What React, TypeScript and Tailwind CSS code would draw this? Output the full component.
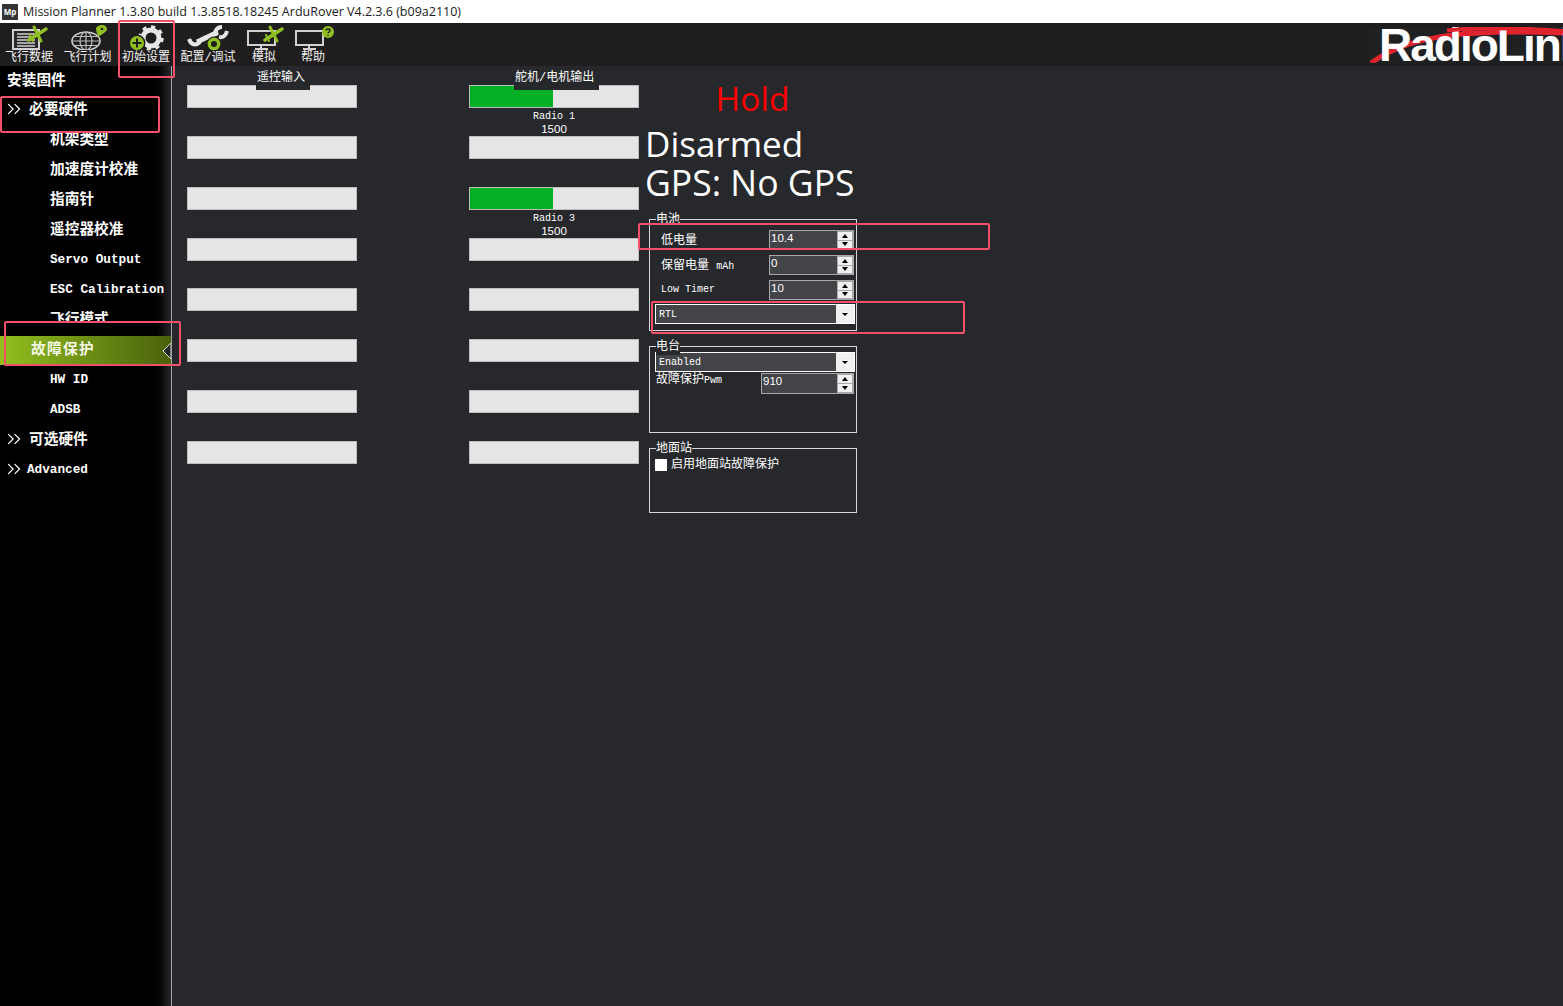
import React from "react";
import { ChevronsRight } from "lucide-react";

const GREEN = "#8fbf21";

function PlaneMark({ x, y }: { x: number; y: number }) {
  return (
    <g transform={`translate(${x} ${y})`} stroke={GREEN} strokeLinecap="round" fill="none">
      <path d="M1 14L18 3" strokeWidth="3.500" />
      <path d="M6 1L13 15" strokeWidth="3" />
      <path d="M2 9L5 15" strokeWidth="2" />
    </g>
  );
}

function FlightDataIcon() {
  return (
    <svg width="44" height="26" viewBox="0 0 44 26">
      <rect x="6" y="6" width="26" height="19" fill="#2a2828" stroke="#d2d2d2" strokeWidth="2" />
      <path d="M10 10h18M10 13h18M10 16h18M10 19h18M10 22h18" stroke="#cfcfcf" strokeWidth="1.300" />
      <PlaneMark x={21} y={2} />
    </svg>
  );
}

function FlightPlanIcon() {
  return (
    <svg width="44" height="26" viewBox="0 0 44 26">
      <ellipse cx="20" cy="17" rx="14" ry="9" fill="#1f1d1d" stroke="#cfcfcf" strokeWidth="1.600" />
      <ellipse cx="20" cy="17" rx="6" ry="9" fill="none" stroke="#bdbdbd" strokeWidth="1.200" />
      <path d="M6 17h28M9 12.500h22M9 21.500h22M20 8v18" stroke="#bdbdbd" strokeWidth="1.200" />
      <path d="M36 1c3 0 5 2 5 4 0 3-5 5-9 8 0-3-2-5-2-8 0-2 3-4 6-4z" fill={GREEN} />
      <circle cx="36" cy="5" r="1.300" fill="#1f1d1d" />
    </svg>
  );
}

function SetupIcon() {
  return (
    <svg width="42" height="26" viewBox="0 0 42 26">
      <circle cx="26" cy="14" r="8" fill="none" stroke="#e6e6e6" strokeWidth="5" />
      <circle cx="26" cy="14" r="11" fill="none" stroke="#e6e6e6" strokeWidth="3.500" strokeDasharray="4 4.600" />
      <circle cx="26" cy="13" r="3" fill="#1f1d1d" />
      <circle cx="12" cy="19" r="8.500" fill="#1f1d1d" />
      <circle cx="12" cy="19" r="7" fill={GREEN} />
      <path d="M7.500 19h9M12 14.500v9" stroke="#1f1d1d" strokeWidth="2" />
    </svg>
  );
}

function ConfigIcon() {
  return (
    <svg width="44" height="26" viewBox="0 0 44 26">
      <path d="M11 18L32 8" stroke="#e6e6e6" strokeWidth="5" />
      <path d="M3 15c2 6 7 7 11 3" fill="none" stroke="#e6e6e6" strokeWidth="4" />
      <path d="M30 12c-2-5 1-9 6-9M33 13c4 1 7-2 8-6" fill="none" stroke="#e6e6e6" strokeWidth="4" />
      <circle cx="28" cy="20" r="7.500" fill="#1f1d1d" />
      <circle cx="28" cy="20" r="4.700" fill="none" stroke={GREEN} strokeWidth="3.400" />
    </svg>
  );
}

function SimIcon() {
  return (
    <svg width="40" height="26" viewBox="0 0 40 26">
      <rect x="4" y="7" width="27" height="14" fill="none" stroke="#d2d2d2" strokeWidth="2" />
      <path d="M17 21v4M11 25h13" stroke="#d2d2d2" strokeWidth="2" />
      <PlaneMark x={20} y={2} />
    </svg>
  );
}

function HelpIcon() {
  return (
    <svg width="44" height="26" viewBox="0 0 44 26">
      <rect x="5" y="7" width="27" height="14" fill="none" stroke="#d2d2d2" strokeWidth="2" />
      <path d="M18 21v4M12 25h13" stroke="#d2d2d2" strokeWidth="2" />
      <circle cx="37" cy="8" r="6" fill={GREEN} />
      <path d="M35 6.500c0-2 4-2 4 0 0 1.500-2 1.500-2 3M37 11v1" fill="none" stroke="#1f1d1d" strokeWidth="1.400" />
    </svg>
  );
}

const tools = [
  { label: "飞行数据", width: "w-[58px]", icon: <FlightDataIcon /> },
  { label: "飞行计划", width: "w-[59px]", icon: <FlightPlanIcon /> },
  { label: "初始设置", width: "w-[58px]", icon: <SetupIcon /> },
  { label: "配置/调试", width: "w-[66px]", icon: <ConfigIcon /> },
  { label: "模拟", width: "w-[46px]", icon: <SimIcon /> },
  { label: "帮助", width: "w-[52px]", icon: <HelpIcon /> },
];

const SANS_NUM = "font-['Liberation_Sans',sans-serif] text-[11.5px]";

function SideRow({ children, indent, arrow }: { children: React.ReactNode; indent: string; arrow?: boolean }) {
  return (
    <div className={`flex h-[30px] items-center whitespace-nowrap pt-[2px] text-[14.7px] font-bold leading-none text-white ${indent}`}>
      {arrow && <ChevronsRight size={22} strokeWidth={1.3} className="ml-[-5px] mr-[4px] mt-[-2px] shrink-0" />}
      {children}
    </div>
  );
}

function Bar({ value }: { value?: boolean }) {
  return (
    <div className="h-[23px] w-[170px] border border-[#bdbdbd] bg-[#e5e5e5]">
      {value && <div className="h-full w-[83px] bg-[#06b025]" />}
    </div>
  );
}

function Spin({ value, width, height = "h-[20px]" }: { value: string; width: string; height?: string }) {
  return (
    <div className={`flex items-stretch border border-[#a8a8a8] bg-[#434447] ${width} ${height}`}>
      <span className={`flex-1 pl-[1px] leading-[15px] text-white ${SANS_NUM}`}>{value}</span>
      <div className="flex w-[16px] flex-col gap-[1px] bg-[#a8a8a8] p-[1px]">
        <div className="flex flex-1 items-center justify-center bg-[#f0f0f0]">
          <div className="h-0 w-0 border-x-[3.500px] border-b-[4px] border-x-transparent border-b-black" />
        </div>
        <div className="flex flex-1 items-center justify-center bg-[#f0f0f0]">
          <div className="h-0 w-0 border-x-[3.500px] border-t-[4px] border-x-transparent border-t-black" />
        </div>
      </div>
    </div>
  );
}

function Combo({ value }: { value: string }) {
  return (
    <div className="flex h-[20px] w-[200px] items-stretch border border-white bg-[#434447]">
      <span className="flex-1 pl-[3px] text-[10px] leading-[19px] text-white">{value}</span>
      <div className="flex w-[18px] items-center justify-center bg-[#f0f0f0]">
        <div className="h-0 w-0 border-x-[3px] border-t-[3px] border-x-transparent border-t-black" />
      </div>
    </div>
  );
}

function Group({ title, height, children }: { title: string; height: string; children: React.ReactNode }) {
  return (
    <div className={`relative w-[208px] border border-[#d8d8d8] ${height}`}>
      <span className="absolute left-[6px] top-[-8px] bg-[#26282b] text-[12px] leading-[16px] text-white">{title}</span>
      {children}
    </div>
  );
}

function Note({ className, children }: { className: string; children?: React.ReactNode }) {
  return <div className={`absolute rounded-[2px] border-2 border-[#f5506a] ${className}`}>{children}</div>;
}

export default function App() {
  const rows = [
    { key: 0, h: "h-[51px]" },
    { key: 1, h: "h-[51px]" },
    { key: 2, h: "h-[51px]" },
    { key: 3, h: "h-[50px]" },
    { key: 4, h: "h-[51px]" },
    { key: 5, h: "h-[51px]" },
    { key: 6, h: "h-[51px]" },
    { key: 7, h: "h-[51px]" },
  ];

  return (
    <div className="relative flex h-[1006px] w-[1563px] flex-col overflow-hidden bg-[#26282b] font-['Liberation_Mono','Noto_Sans_CJK_SC',monospace]">
      {/* Title bar */}
      <div className="flex h-[23px] items-center gap-[5px] bg-white pl-[2px] font-['Open_Sans',sans-serif] text-[12.5px] text-[#1a1a1a]">
        <div className="flex h-[16px] w-[16px] items-center justify-center bg-[#333] text-[8px] font-bold leading-none text-white">Mp</div>
        <span className="whitespace-nowrap pt-[1px]">Mission Planner 1.3.80 build 1.3.8518.18245 ArduRover V4.2.3.6 (b09a2110)</span>
      </div>

      {/* Toolbar */}
      <div className="flex h-[43px] items-start justify-between bg-[#1f1d1d]">
        <div className="flex">
          {tools.map((t) => (
            <div key={t.label} className={`flex flex-col items-center pt-[1px] ${t.width}`}>
              <div className="flex h-[26px] items-center">{t.icon}</div>
              <span className="mt-[1px] whitespace-nowrap text-[12px] leading-[15px] text-[#f2f2f2]">{t.label}</span>
            </div>
          ))}
        </div>
        <div className="relative mt-[4px] h-[36px] w-[196px] overflow-hidden bg-[#1e2022]">
          <svg width="196" height="36" viewBox="0 0 196 36" className="absolute inset-0">
            <path d="M4 36C40 10 90 2 196 6" fill="none" stroke="#e0242e" strokeWidth="5" />
          </svg>
          <span className="absolute left-[12px] top-[-9px] whitespace-nowrap font-['Liberation_Sans',sans-serif] text-[46px] font-bold leading-[54px] tracking-[-2px] text-white">
            RadioLink
          </span>
          <svg width="196" height="36" viewBox="0 0 196 36" className="absolute inset-0">
            <path d="M80 3.500C110 0 150 1 196 4" fill="none" stroke="#e0242e" strokeWidth="4" />
            <circle cx="100" cy="3" r="4" fill="#e0242e" />
            <circle cx="163" cy="3" r="4" fill="#e0242e" />
          </svg>
        </div>
      </div>

      <div className="flex flex-1">
        {/* Sidebar */}
        <div className="w-[172px] shrink-0 border-r border-[#a8a8a8] bg-gradient-to-r from-black from-[88%] to-[#26282b]">
          <div className="flex h-[28px] items-center pl-[7px] pt-[2px] text-[14.7px] font-bold leading-none text-white">安装固件</div>
          <SideRow indent="pl-[8px]" arrow>必要硬件</SideRow>
          <SideRow indent="pl-[50px]">机架类型</SideRow>
          <SideRow indent="pl-[50px]">加速度计校准</SideRow>
          <SideRow indent="pl-[50px]">指南针</SideRow>
          <SideRow indent="pl-[50px]">遥控器校准</SideRow>
          <SideRow indent="pl-[50px]"><span className="text-[12.7px]">Servo Output</span></SideRow>
          <SideRow indent="pl-[50px]"><span className="text-[12.7px]">ESC Calibration</span></SideRow>
          <SideRow indent="pl-[50px]">飞行模式</SideRow>
          <div className="relative flex h-[30px] items-center pl-[31px] pt-[2px] text-[14.7px] font-bold leading-none tracking-[1.300px] text-[#f4f7e4]">
            <div className="absolute inset-x-0 bottom-[-1px] top-[2px] bg-gradient-to-r from-[#93bf1e] to-[#4a620c]" />
            <span className="relative">故障保护</span>
            <svg width="9" height="16" viewBox="0 0 9 16" className="absolute right-0 top-[9px]">
              <path d="M9 0L1 8l8 8z" fill="#26282b" stroke="#d9e0c8" strokeWidth="1" />
            </svg>
          </div>
          <SideRow indent="pl-[50px]"><span className="text-[12.7px]">HW ID</span></SideRow>
          <SideRow indent="pl-[50px]"><span className="text-[12.7px]">ADSB</span></SideRow>
          <SideRow indent="pl-[8px]" arrow>可选硬件</SideRow>
          <SideRow indent="pl-[8px]" arrow><span className="ml-[-2px] text-[12.7px]">Advanced</span></SideRow>
        </div>

        {/* Content */}
        <div className="flex pl-[15px]">
          <div className="relative w-[170px] pt-[19px]">
            <span className="absolute left-[69px] top-[2px] h-[22px] w-[54px] bg-[#26282b] pl-[1px] text-left text-[12px] leading-[21px] text-white">遥控输入</span>
            {rows.map((r) => (
              <div key={r.key} className={r.h}>
                <Bar />
              </div>
            ))}
          </div>

          <div className="relative ml-[112px] w-[170px] pt-[19px]">
            <span className="absolute left-[45px] top-[2px] z-10 h-[22px] w-[85px] bg-[#26282b] pl-[1px] text-left text-[12px] leading-[21px] text-white">舵机/电机输出</span>
            {rows.map((r) => (
              <div key={r.key} className={r.h}>
                <Bar value={r.key === 0 || r.key === 2} />
                {(r.key === 0 || r.key === 2) && (
                  <div className="pt-[2px] text-center text-[10px] leading-[13px] text-white">
                    <div>Radio {r.key + 1}</div>
                    <div className={SANS_NUM}>1500</div>
                  </div>
                )}
              </div>
            ))}
          </div>

          <div className="ml-[6px] flex w-[240px] flex-col">
            <div className="mt-[12px] h-[40px] w-[215px] text-center font-['Open_Sans',sans-serif] text-[33.500px] leading-[40px] text-[#ff0000]">Hold</div>
            <div className="mt-[6px] h-[39px] whitespace-nowrap font-['Open_Sans',sans-serif] text-[35px] leading-[39px] text-white">Disarmed</div>
            <div className="h-[39px] whitespace-nowrap font-['Open_Sans',sans-serif] text-[35.600px] leading-[39px] text-white">GPS: No GPS</div>

            <div className="ml-[4px] mt-[17px] flex flex-col gap-[15px]">
              <Group title="电池" height="h-[112px]">
                <div className="flex flex-col pl-[5px] pt-[10px]">
                  <div className="flex h-[25px] items-start">
                    <span className="w-[114px] pl-[6px] text-[12px] leading-[22px] text-white">低电量</span>
                    <Spin value="10.4" width="w-[85px]" />
                  </div>
                  <div className="flex h-[25px] items-start">
                    <span className="w-[114px] whitespace-nowrap pl-[6px] text-[12px] leading-[22px] text-white">保留电量 <span className="text-[10px]">mAh</span></span>
                    <Spin value="0" width="w-[85px]" />
                  </div>
                  <div className="flex h-[24px] items-start">
                    <span className="w-[114px] pl-[6px] text-[10px] leading-[20px] text-white">Low Timer</span>
                    <Spin value="10" width="w-[85px]" />
                  </div>
                  <Combo value="RTL" />
                </div>
              </Group>

              <Group title="电台" height="h-[87px]">
                <div className="flex flex-col pl-[5px] pt-[5px]">
                  <Combo value="Enabled" />
                  <div className="mt-[1px] flex h-[21px] items-start">
                    <span className="w-[106px] whitespace-nowrap pl-[1px] text-[12px] leading-[15px] text-white">故障保护<span className="text-[10px]">Pwm</span></span>
                    <Spin value="910" width="w-[93px]" height="h-[21px]" />
                  </div>
                </div>
              </Group>

              <Group title="地面站" height="h-[65px]">
                <div className="flex items-center gap-[4px] pl-[5px] pt-[8px]">
                  <div className="h-[12px] w-[12px] bg-white" />
                  <span className="text-[12px] leading-[16px] text-white">启用地面站故障保护</span>
                </div>
              </Group>
            </div>
          </div>
        </div>
      </div>

      {/* Red annotation boxes on top of the screenshot */}
      <Note className="left-[118px] top-[20px] h-[58px] w-[57px]" />
      <Note className="left-0 top-[96px] h-[37px] w-[160px]">
        <div className="absolute inset-x-0 bottom-0 h-[7px] bg-black" />
      </Note>
      <Note className="left-[4px] top-[321px] h-[45px] w-[177px]">
        <div className="absolute left-0 top-0 h-[13px] w-[150px] bg-black" />
      </Note>
      <Note className="left-[638px] top-[223px] h-[27px] w-[352px]" />
      <Note className="left-[651px] top-[301px] h-[33px] w-[314px]" />
    </div>
  );
}
